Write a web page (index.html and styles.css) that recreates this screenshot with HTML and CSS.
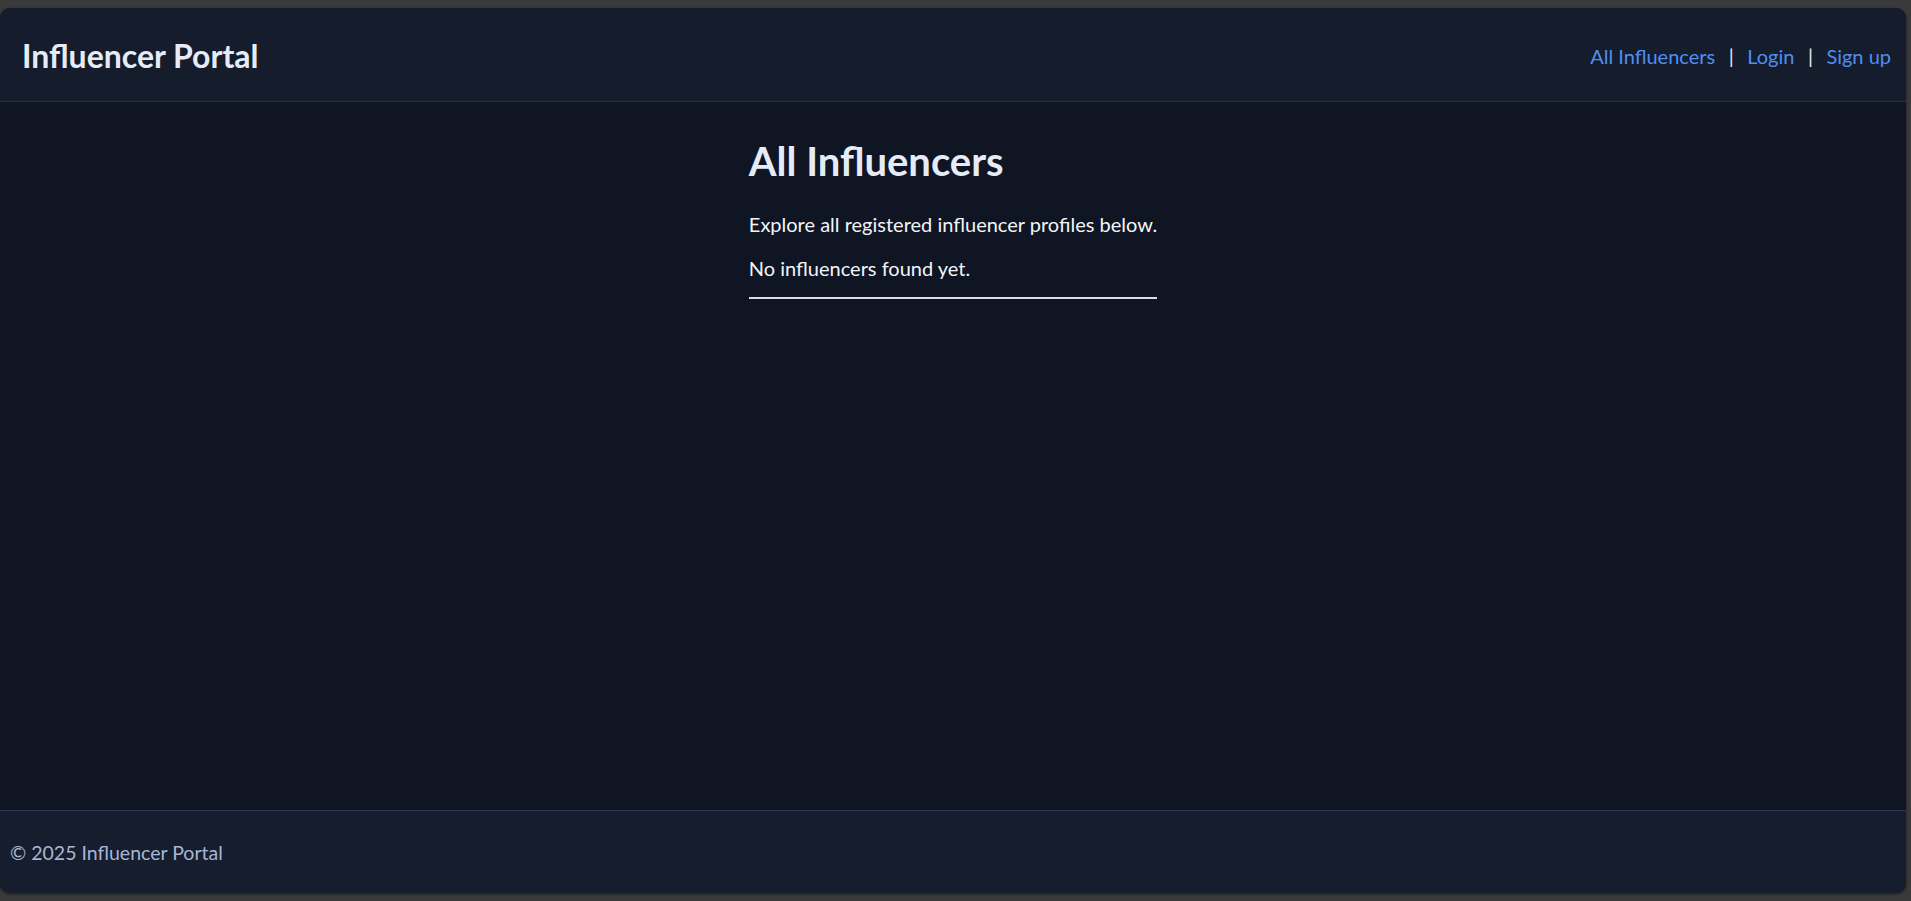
FILE: index.html
```html
<!DOCTYPE html>
<html lang="en">
<head>
<meta charset="utf-8">
<title>All Influencers - Influencer Portal</title>
<link rel="stylesheet" href="styles.css">
</head>
<body>
<div class="window">
  <header class="site-header">
    <div class="brand">Influencer Portal</div>
    <nav class="nav">
      <a href="#" class="nav-link">All Influencers</a>
      <span class="sep">|</span>
      <a href="#" class="nav-link">Login</a>
      <span class="sep">|</span>
      <a href="#" class="nav-link">Sign up</a>
    </nav>
  </header>
  <main class="content">
    <section class="listing">
      <h1 class="title">All Influencers</h1>
      <p class="lead">Explore all registered influencer profiles below.</p>
      <p class="empty">No influencers found yet.</p>
      <hr class="divider">
    </section>
  </main>
  <footer class="site-footer">
    <p class="copy">© 2025 Influencer Portal</p>
  </footer>
</div>
</body>
</html>
```
FILE: styles.css
```css
html, body {
  margin: 0;
  padding: 0;
  height: 100%;
}
body {
  background: #3a3a3b;
  font-family: "Lato", "Noto Sans", sans-serif;
  box-sizing: border-box;
  padding: 8px 5px 8px 0;
}
.window {
  height: 885px;
  display: flex;
  flex-direction: column;
  background: #0f1523;
  border-radius: 10px;
  overflow: hidden;
  box-shadow: 0 1px 3px rgba(0,0,0,0.5);
}
.site-header {
  height: 93px;
  flex: none;
  display: flex;
  align-items: center;
  justify-content: space-between;
  padding: 0 15px 0 22px;
  background: #151c2c;
  border-bottom: 1px solid #263049;
}
.brand {
  font-size: 32px;
  font-weight: 700;
  line-height: 1.2;
  color: #e6ecf7;
  padding-top: 3px;
}
.nav {
  display: flex;
  align-items: center;
  font-size: 20px;
  line-height: 1.2;
  padding-top: 3px;
}
.nav-link {
  color: #4f8ff3;
  text-decoration: none;
}
.sep {
  color: #e8ecf3;
  margin: 0 13.5px;
}
.content {
  flex: 1;
  padding-top: 35px;
}
.listing {
  width: fit-content;
  margin: 0 auto;
  color: #f1f4f9;
}
.title {
  margin: 0 0 27px;
  font-size: 40px;
  line-height: 1.2;
  font-weight: 700;
  color: #e6ecf7;
}
.lead, .empty {
  margin: 0;
  font-size: 20px;
  line-height: 1.2;
}
.lead {
  margin-bottom: 20px;
}
.divider {
  margin: 17px 0 0;
  border: none;
  border-top: 2px solid #d9dde4;
  height: 0;
}
.site-footer {
  height: 83px;
  flex: none;
  display: flex;
  align-items: center;
  padding: 2px 10px 0;
  box-sizing: border-box;
  background: #161d2d;
  border-top: 1px solid #2a3553;
}
.copy {
  margin: 0;
  font-size: 19.5px;
  line-height: 1.2;
  color: #a8b6d6;
}
```
